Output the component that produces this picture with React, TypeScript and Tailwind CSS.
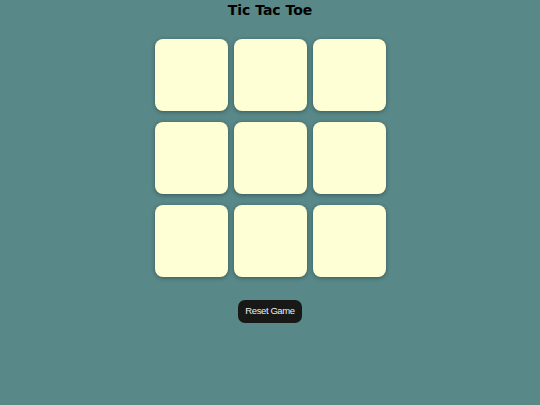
import React from "react";

export default function App() {
  const cells = Array.from({ length: 9 });
  return (
    <div className="w-[540px] h-[405px] bg-[#588888] flex flex-col items-center" style={{ fontFamily: "'DejaVu Sans', sans-serif" }}>
      <h1 className="text-[14px] font-bold text-black leading-[18px] mt-[1px]">Tic Tac Toe</h1>
      <div className="mt-[20px] grid grid-cols-[73px_73px_73px] gap-x-[6px] gap-y-[11px]">
        {cells.map((_, i) => (
          <div
            key={i}
            className="h-[72px] bg-[#ffffd5] rounded-[8px] shadow-[0_1px_4px_rgba(0,0,0,0.35)]"
          />
        ))}
      </div>
      <button
        className="mt-[23px] h-[23px] px-[7px] rounded-[7px] bg-[#181817] text-[#eeeeee] text-[9.5px] tracking-[-0.4px]"
        style={{ fontFamily: "'Liberation Sans', Arial, sans-serif" }}
      >
        Reset Game
      </button>
    </div>
  );
}
